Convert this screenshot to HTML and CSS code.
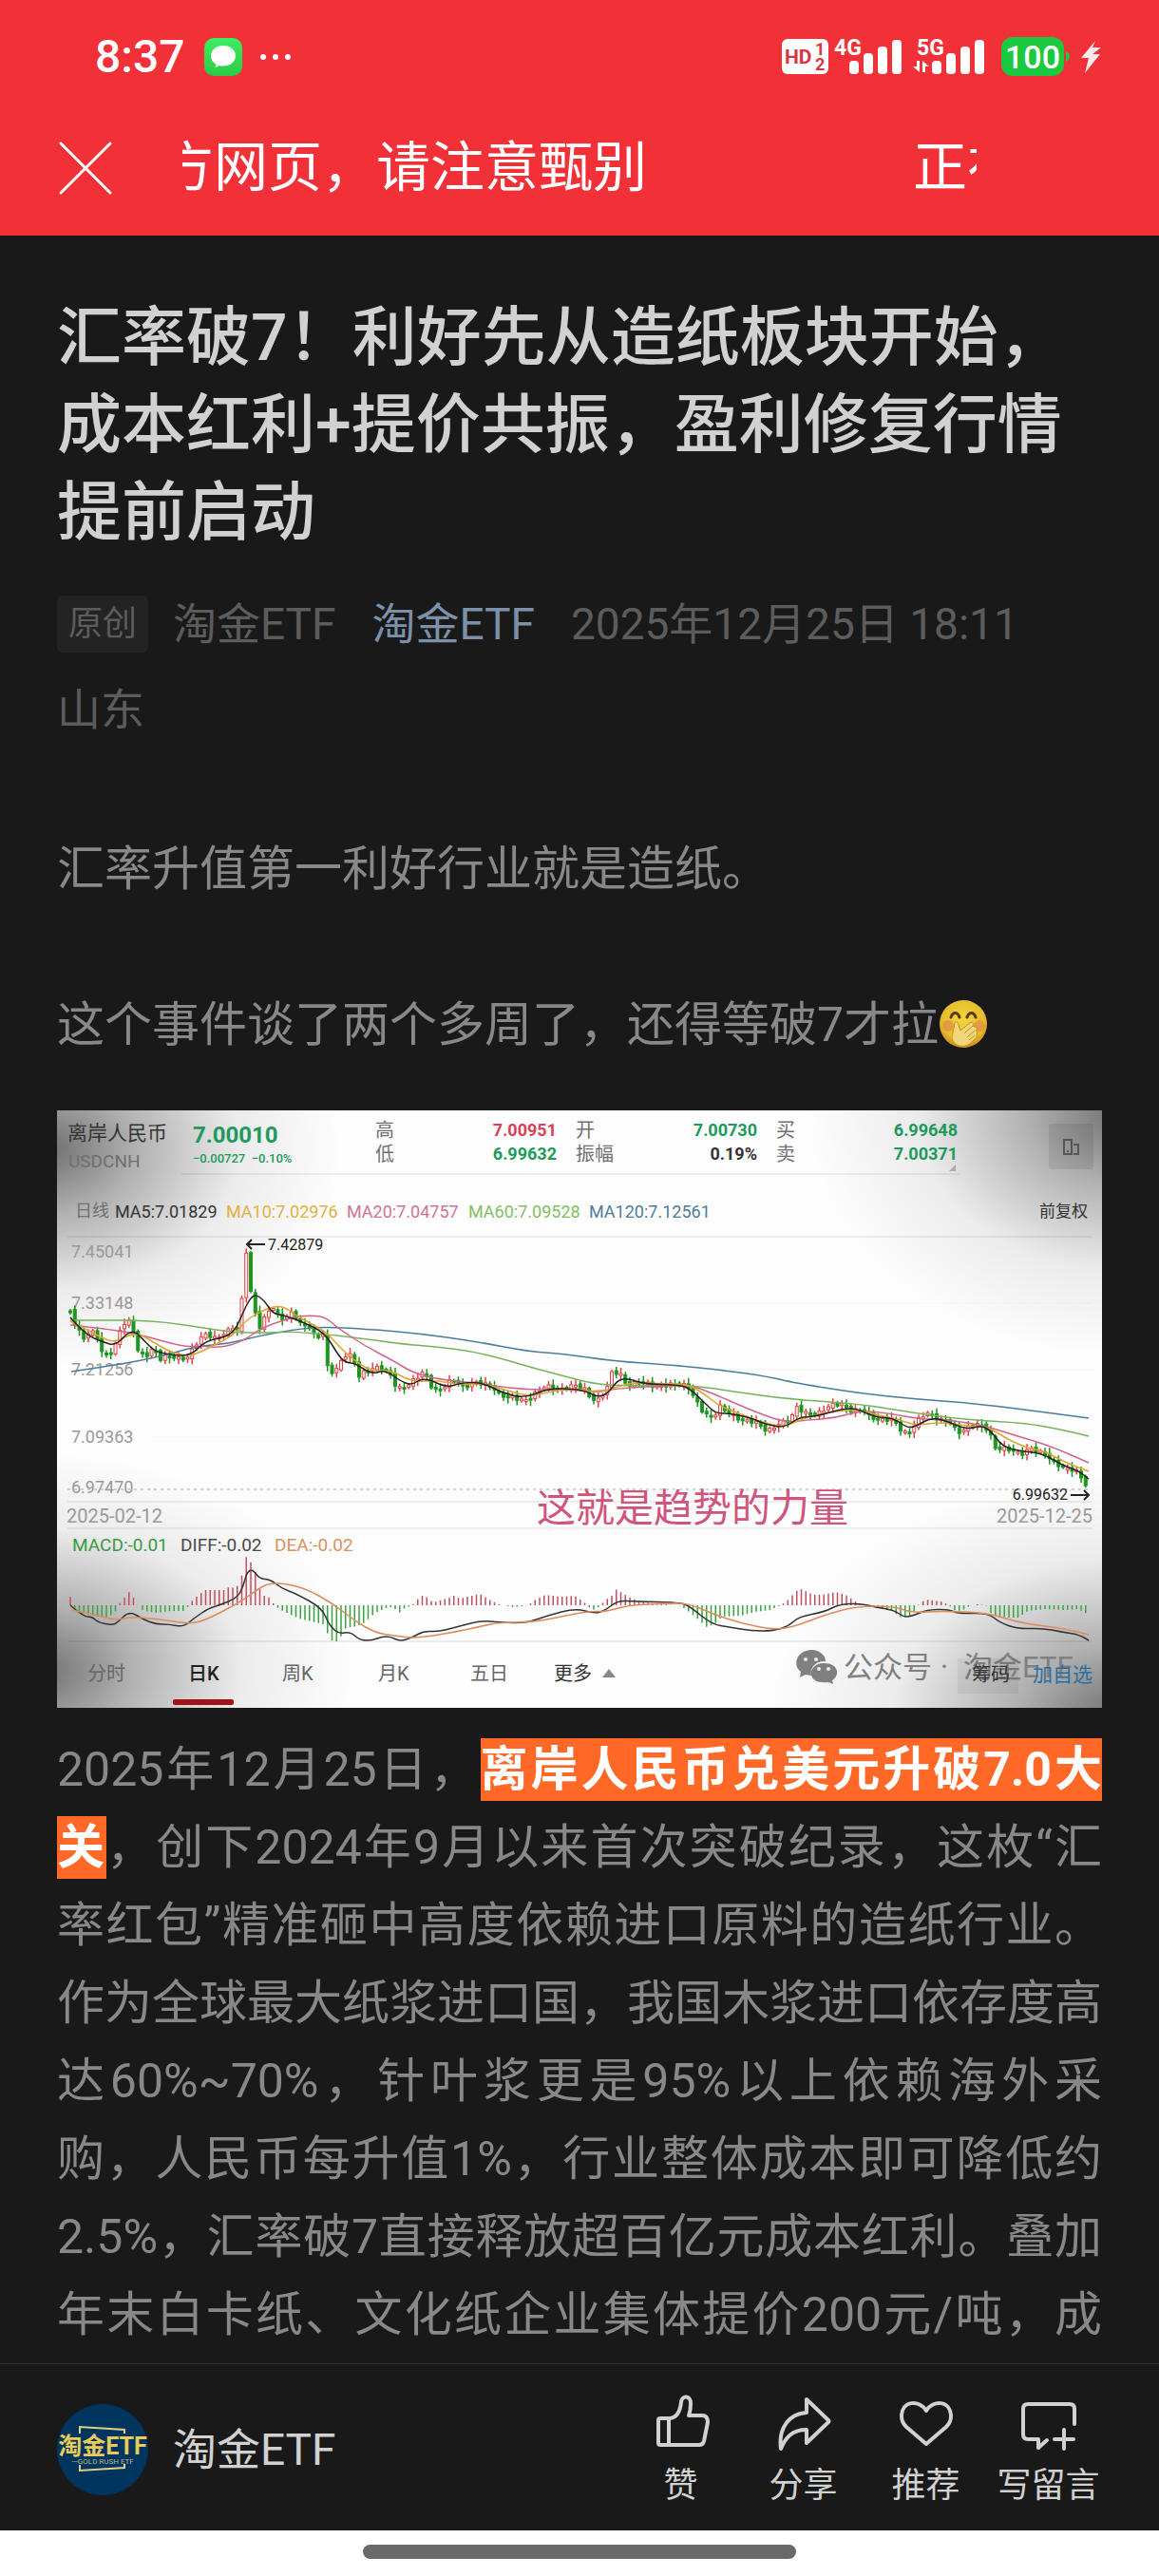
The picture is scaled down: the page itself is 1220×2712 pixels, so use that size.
FILE: index.html
```html
<!DOCTYPE html>
<html lang="zh-CN">
<head>
    <meta charset="UTF-8">
    <meta name="viewport" content="width=device-width, initial-scale=1.0">
    <title>汇率破7！利好先从造纸板块开始</title>
    <link rel="stylesheet" href="styles.css">
</head>
<body>

    <header class="header">
        <div class="status-bar">
            <span class="time">8:37</span>
            <svg class="msg-icon" width="40" height="40" viewBox="0 0 40 40">
                <defs>
                    <linearGradient id="msgGreen" x1="0" y1="0" x2="0" y2="1">
                        <stop offset="0" stop-color="#3bef62"/>
                        <stop offset="1" stop-color="#2bcb42"/>
                    </linearGradient>
                </defs>
                <rect width="40" height="40" rx="10" fill="url(#msgGreen)"/>
                <path d="M20 8c7.500 0 13 4.800 13 10.800s-5.500 10.800-13 10.800c-1.700 0-3.200-.2-4.600-.6-1 1-2.500 1.800-4.200 2 .9-1 1.300-2.200 1.200-3.300C9 26 7 22.700 7 18.800 7 12.800 12.500 8 20 8z" fill="#fff"/>
            </svg>
            <svg class="dots" width="34" height="8" viewBox="0 0 34 8" fill="#fff">
                <circle cx="4" cy="4" r="3"/><circle cx="17" cy="4" r="3"/><circle cx="30" cy="4" r="3"/>
            </svg>
            <svg class="signals" width="338" height="44" viewBox="0 0 338 44" fill="#fff">
                <rect x="1" y="3" width="49" height="37" rx="6"/>
                <g fill="#d83540" font-weight="bold">
                    <text x="4" y="29" font-size="21">HD</text>
                    <text x="36" y="20" font-size="18">1</text>
                    <text x="36" y="36" font-size="18">2</text>
                </g>
                <text x="56" y="20" font-size="23" font-weight="bold">4G</text>
                <rect x="72" y="26" width="10" height="14" rx="4"/>
                <rect x="87" y="18" width="10" height="22" rx="4"/>
                <rect x="102" y="11" width="10" height="29" rx="4"/>
                <rect x="117" y="4" width="10" height="36" rx="4"/>
                <text x="143" y="20" font-size="23" font-weight="bold">5G</text>
                <path d="M146 26v12l-7-6h4v-6zM149 38V26l7 6h-4v6z"/>
                <rect x="159" y="26" width="10" height="14" rx="4"/>
                <rect x="174" y="18" width="10" height="22" rx="4"/>
                <rect x="189" y="11" width="10" height="29" rx="4"/>
                <rect x="204" y="4" width="10" height="36" rx="4"/>
                <rect x="232" y="1" width="66" height="41" rx="12" fill="#19c940"/>
                <path d="M300 16c5 1 5 10 0 11z" fill="#19c940"/>
                <text x="265" y="34" font-size="34" font-weight="500" text-anchor="middle">100</text>
                <path d="M331 5l-15 18h8l-4 16 16-20h-8l9-7h-9z" opacity=".9"/>
            </svg>
        </div>
        <div class="nav-bar">
            <button class="close" aria-label="关闭">
                <svg width="60" height="60" viewBox="0 0 60 60" fill="none" stroke="#fff" stroke-width="3" stroke-linecap="round">
                    <path d="M4 4l52 52M56 4L4 56"/>
                </svg>
            </button>
            <div class="notice"><span>方网页，请注意甄别</span><span>正在</span></div>
        </div>
    </header>

    <main class="article">
        <h1>汇率破7！利好先从造纸板块开始，成本红利+提价共振，盈利修复行情提前启动</h1>
        <div class="meta">
            <span class="original">原创</span>
            <span>淘金ETF</span>
            <a href="#">淘金ETF</a>
            <span>2025年12月25日 18:11</span>
            <span>山东</span>
        </div>

        <p>汇率升值第一利好行业就是造纸。</p>
        <p>这个事件谈了两个多周了，还得等破7才拉<svg class="emoji" viewBox="0 0 52 52">
            <defs>
                <radialGradient id="face" cx=".5" cy=".4" r=".6">
                    <stop offset="0" stop-color="#f0d53c"/>
                    <stop offset=".75" stop-color="#e6bd2c"/>
                    <stop offset="1" stop-color="#cf8a1c"/>
                </radialGradient>
            </defs>
            <circle cx="26" cy="26" r="25" fill="url(#face)"/>
            <circle cx="10" cy="28" r="6" fill="#e08a4a" opacity=".7"/>
            <circle cx="43" cy="28" r="6" fill="#e08a4a" opacity=".7"/>
            <path d="M13 19c2-6 7-6 9 0M30 19c2-6 7-6 9 0" fill="none" stroke="#5a3a10" stroke-width="3" stroke-linecap="round"/>
            <path d="M17 25c2-3 4 0 4 2l2 6 10-8c3-2 5 1 3 3l2 1c2 0 3 2 1 4 2 0 2 3 1 4 1 2-1 4-3 6-5 6-12 8-18 5-6-4-5-9-4-13z" fill="#f1d67a" stroke="#c98f22"/>
            <path d="M36 28l-9 8M38 33l-8 7M38 38l-6 5" stroke="#c98f22"/>
        </svg></p>

        <svg class="chart" viewBox="0 0 1100 629" role="img" aria-label="离岸人民币 日K">
            <defs>
                <radialGradient id="shade">
                    <stop offset="0" stop-color="#000" stop-opacity=".56"/>
                    <stop offset=".3" stop-color="#000" stop-opacity=".3"/>
                    <stop offset=".65" stop-color="#000" stop-opacity=".07"/>
                    <stop offset="1" stop-color="#000" stop-opacity="0"/>
                </radialGradient>
            </defs>
            <rect width="1100" height="629" fill="#fdfdfd"/>
            <g fill="url(#shade)">
                <ellipse cx="-10" cy="40" rx="310" ry="230"/>
                <ellipse cx="1120" cy="0" rx="330" ry="260"/>
                <ellipse cx="-20" cy="590" rx="330" ry="230"/>
                <ellipse cx="1120" cy="640" rx="370" ry="260"/>
            </g>
            <path d="M131 67H951M11 133H1090M11 412H1090M11 440H1090M11 559H1090" stroke="#000" stroke-opacity=".06" stroke-width="2"/>
            <path d="M100 203H1090M100 273H1090M100 344H1090" stroke="#000" stroke-opacity=".03"/>
            <path d="M11 399H1086" stroke="#b9ac90" stroke-dasharray="3 4"/>

            <g class="cjk" fill="#707070">
                <text x="11" y="31" font-size="21" fill="#333">离岸人民币</text>
                <text x="12" y="60" font-size="19">USDCNH</text>
                <text x="335" y="28" font-size="20">高</text>
                <text x="335" y="53" font-size="20">低</text>
                <text x="546" y="28" font-size="20">开</text>
                <text x="546" y="53" font-size="20">振幅</text>
                <text x="757" y="28" font-size="20">买</text>
                <text x="757" y="53" font-size="20">卖</text>
                <text x="19" y="112" font-size="18">日线</text>
                <text x="1034" y="112" font-size="17" fill="#333">前复权</text>
            </g>
            <g fill="#1d9a5c" font-weight="bold">
                <text x="143" y="34" font-size="24">7.00010</text>
                <text x="143" y="55" font-size="13" font-weight="500">−0.00727 &nbsp;−0.10%</text>
                <g font-size="18" text-anchor="end">
                    <text x="526" y="27" fill="#d9405c">7.00951</text>
                    <text x="526" y="52">6.99632</text>
                    <text x="737" y="27">7.00730</text>
                    <text x="737" y="52" fill="#333">0.19%</text>
                    <text x="948" y="27">6.99648</text>
                    <text x="948" y="52">7.00371</text>
                </g>
            </g>
            <path d="M946 57v7h-7z" fill="#aaa"/>
            <rect x="1044" y="14" width="47" height="48" rx="3" fill="#000" opacity=".08"/>
            <path d="M1060 31h8v15h-8zM1070 36h5v10h-5M1063 43h2" fill="none" stroke="#555" stroke-width="2"/>

            <g font-size="18">
                <text x="61" y="113" fill="#333">MA5:7.01829</text>
                <text x="178" y="113" fill="#dfb243">MA10:7.02976</text>
                <text x="305" y="113" fill="#d07493">MA20:7.04757</text>
                <text x="433" y="113" fill="#85bd66">MA60:7.09528</text>
                <text x="560" y="113" fill="#4c7d9c">MA120:7.12561</text>
                <g fill="#999">
                    <text x="15" y="155">7.45041</text>
                    <text x="15" y="209">7.33148</text>
                    <text x="15" y="279">7.21256</text>
                    <text x="15" y="350">7.09363</text>
                    <text x="15" y="403">6.97470</text>
                </g>
            </g>
            <g font-size="20" fill="#999">
                <text x="10" y="434">2025-02-12</text>
                <text x="1090" y="434" text-anchor="end">2025-12-25</text>
            </g>
            <g font-size="19">
                <text x="16" y="464" fill="#3a9a44">MACD:-0.01</text>
                <text x="130" y="464" fill="#4a4a4a">DIFF:-0.02</text>
                <text x="229" y="464" fill="#d9935f">DEA:-0.02</text>
            </g>

            <!-- filled in by chart.js -->
            <g id="candles"></g>
            <g id="macd"></g>
            <g id="lines" fill="none" stroke-width="1.500"></g>

            <g font-size="16" fill="#222">
                <text x="222" y="147">7.42879</text>
                <text x="1064" y="410" text-anchor="end">6.99632</text>
            </g>
            <path d="M219 141H200M205 136l-5 5 5 5M1067 405h19M1081 400l5 5-5 5" fill="none" stroke="#222" stroke-width="2"/>
            <text class="cjk" x="505" y="433" font-size="41" fill="#d0557d">这就是趋势的力量</text>

            <g class="cjk" font-size="20" fill="#666">
                <text x="32" y="600">分时</text>
                <text x="138" y="600" fill="#222" font-weight="500">日K</text>
                <text x="237" y="600">周K</text>
                <text x="338" y="600">月K</text>
                <text x="435" y="600">五日</text>
                <text x="523" y="600" fill="#333">更多</text>
            </g>
            <path d="M574 597l7-9 7 9z" fill="#888"/>
            <rect x="122" y="620" width="64" height="6" rx="2" fill="#a80f1a"/>

            <g fill="#808080">
                <path d="M794 568c9 0 15 6 15 12-9-1-17 6-15 15l-6-1-6 3 1-6c-10-8-3-23 11-23z"/>
                <path d="M807 582c17 0 17 14 9 18l1 4-5-2c-25 3-22-20-5-20z"/>
                <g fill="#eee">
                    <circle cx="788" cy="578" r="2"/><circle cx="799" cy="578" r="2"/>
                    <circle cx="802" cy="588" r="2"/><circle cx="812" cy="588" r="2"/>
                </g>
                <g class="cjk" font-size="31">
                    <text x="828" y="597">公众号</text>
                    <text x="930" y="597">·</text>
                    <text x="954" y="597">淘金ETF</text>
                </g>
            </g>
            <rect x="948" y="577" width="64" height="37" fill="#000" opacity=".05"/>
            <text class="cjk" x="963" y="601" font-size="20" fill="#333">筹码</text>
            <text class="cjk" x="1027" y="601" font-size="21" fill="#2b6f9e">加自选</text>
        </svg>

        <p class="fill">2025年12月25日，<strong>离岸人民币兑美元升破7.0大关</strong>，创下2024年9月以来首次突破纪录，这枚“汇率红包”精准砸中高度依赖进口原料的造纸行业。作为全球最大纸浆进口国，我国木浆进口依存度高达60%~70%，针叶浆更是95%以上依赖海外采购，人民币每升值1%，行业整体成本即可降低约2.5%，汇率破7直接释放超百亿元成本红利。叠加年末白卡纸、文化纸企业集体提价200元/吨，成</p>
    </main>

    <footer class="footer">
        <a class="account" href="#">
            <svg width="96" height="96" viewBox="0 0 96 96">
                <circle cx="48" cy="48" r="48" fill="#00355f"/>
                <path d="M24 31v-7l47 3v4M24 64v6l47-3v-4" fill="none" stroke="#e2cf86" stroke-width="2"/>
                <text class="cjk" x="48" y="53" font-size="25" font-weight="bold" text-anchor="middle" fill="#e8cb58">淘金ETF</text>
                <text x="48" y="63" font-size="8" text-anchor="middle" fill="#b9b98a">---GOLD RUSH ETF</text>
            </svg>
            <span>淘金ETF</span>
        </a>
        <div class="actions">
            <button>
                <svg viewBox="0 0 64 64"><path d="M19 28h-9q-2 0-2 2v24q0 2 2 2h41q4 0 5-4l4-20q0-7-6-7H40c2-5 2-9 2-13 0-8-9-9-10-1-1 9-4 17-13 17zM19 28v28"/></svg>
                赞
            </button>
            <button>
                <svg viewBox="0 0 64 64"><path d="M35 8l23 22q1 1 0 2L35 54V40C20 40 13 48 8 60 5 38 17 23 35 22z"/></svg>
                分享
            </button>
            <button>
                <svg viewBox="0 0 64 64"><path d="M32 20C25 8 6 9 6 26c0 5 2 8 5 11l21 18 21-18c3-3 5-6 5-11C58 9 39 8 32 20z"/></svg>
                推荐
            </button>
            <button>
                <svg viewBox="0 0 64 64"><path d="M59 34V18q0-5-5-5H10q-5 0-5 5v27q0 5 5 5h11v9l9-8M48 40v20M38 50h20"/></svg>
                写留言
            </button>
        </div>
    </footer>
    <div class="home-bar"><span></span></div>

    <script src="chart.js"></script>
</body>
</html>
```

FILE: styles.css
```css
* {
    box-sizing: border-box;
}
body {
    margin: 0;
    height: 100vh;
    display: flex;
    flex-direction: column;
    background-color: #191919;
    color: #888;
    font-family: Roboto, "Noto Sans CJK SC", sans-serif;
    font-size: 50px;
}
button {
    padding: 0;
    border: none;
    background: none;
    font-family: inherit;
    color: inherit;
    cursor: pointer;
}
a {
    text-decoration: none;
}
svg {
    display: block;
    flex-shrink: 0;
}
.cjk {
    font-family: Roboto, "Noto Sans CJK SC", sans-serif;
}

/* top */
.header {
    background-color: #f13038;
    color: #fff;
    padding: 30px 60px 30px;
}
.status-bar {
    display: flex;
    align-items: center;
    height: 60px;
    padding-left: 40px;
}
.time {
    font-size: 48px;
    font-weight: 500;
    line-height: 60px;
}
.msg-icon {
    margin-left: 20px;
}
.dots {
    margin-left: 18px;
}
.signals {
    margin-left: auto;
}
.nav-bar {
    display: flex;
    align-items: center;
    margin-top: 46px;
    height: 82px;
}
.close {
    margin-right: 72px;
}
.notice {
    flex: 1;
    display: flex;
    gap: 280px;
    margin-right: 132px;
    overflow: hidden;
    white-space: nowrap;
    font-size: 57px;
    line-height: 82px;
}
.notice span:first-child {
    margin-left: -24px;
}

/* article */
.article {
    flex: 1;
    min-height: 0;
    overflow: hidden;
    padding: 62px 60px 0;
}
h1 {
    margin: 0 0 26px;
    font-size: 68px;
    line-height: 92px;
    font-weight: 500;
    color: #d1d1d1;
}
.meta {
    display: flex;
    flex-wrap: wrap;
    align-items: center;
    column-gap: 38px;
    margin-bottom: 82px;
    font-size: 46px;
    line-height: 90px;
    color: #5c5c5c;
}
.meta a {
    color: #7d90a9;
}
.meta .original {
    padding: 0 12px;
    border-radius: 6px;
    background-color: #232323;
    font-size: 36px;
    line-height: 60px;
    margin-right: -12px;
}
p {
    margin: 0 0 82px;
    line-height: 82px;
}
.emoji {
    display: inline-block;
    width: 52px;
    height: 52px;
    vertical-align: -8px;
}
.chart {
    width: 100%;
    margin: -33px 0 24px;
    font-family: Roboto, "Noto Sans CJK SC", sans-serif;
}
.fill {
    text-align: justify;
    text-align-last: justify;
}
strong {
    padding: 4px 0;
    background-color: #ff6827;
    color: #fff;
}

/* bottom */
.footer {
    display: flex;
    align-items: center;
    justify-content: space-between;
    height: 176px;
    padding: 4px 52px 0 60px;
    border-top: 1px solid #333;
}
.account {
    display: flex;
    align-items: center;
    gap: 26px;
    font-size: 46px;
    color: #d1d1d1;
}
.account span {
    padding-bottom: 8px;
}
.actions {
    display: grid;
    grid-template-columns: repeat(4, 129px);
}
.actions button {
    display: flex;
    flex-direction: column;
    align-items: center;
    gap: 12px;
    font-size: 36px;
    line-height: 46px;
    color: #d1d1d1;
    white-space: nowrap;
}
.actions svg {
    width: 64px;
    height: 64px;
    fill: none;
    stroke: #d1d1d1;
    stroke-width: 4;
    stroke-linejoin: round;
    stroke-linecap: round;
}
.home-bar {
    display: flex;
    justify-content: center;
    height: 48px;
    padding-top: 15px;
    background-color: #fff;
}
.home-bar span {
    width: 456px;
    height: 15px;
    border-radius: 8px;
    background-color: #696969;
}
```

FILE: chart.js
```javascript
var STEP = 4.75;
var BASE = 521; // MACD zero line

// x, y pairs
var price = [14,211,20,228,28,240,36,232,44,240,48,258,56,256,62,246,68,225,78,222,86,256,94,258,102,250,108,262,116,258,130,262,138,260,146,246,156,235,166,240,176,235,185,228,190,232,194,205,199,146,204,192,209,214,214,230,220,215,226,205,232,216,240,220,248,212,256,225,266,228,272,240,280,235,285,272,292,277,300,262,306,255,312,262,318,280,324,275,332,272,340,270,350,276,358,293,366,292,372,287,380,280,386,275,394,290,402,296,412,286,420,284,428,292,440,286,450,288,460,293,466,300,480,302,492,306,504,298,514,290,530,294,545,289,556,294,562,303,568,307,575,298,580,290,584,276,592,276,600,290,615,285,630,291,650,288,664,290,672,305,682,320,690,324,698,312,710,320,720,326,735,328,748,338,760,330,772,326,778,312,790,320,800,320,815,310,825,309,835,316,850,316,862,326,880,325,888,336,896,342,906,326,915,318,930,326,940,328,948,340,958,334,970,330,980,336,988,356,1000,356,1015,362,1025,356,1040,362,1052,372,1062,378,1072,378,1080,390,1086,398];
var ma5 = [14,218,19,224,34,238,49,244,62,248,79,229,95,246,104,254,123,258,141,258,156,243,175,239,187,233,198,208,204,197,210,194,219,201,227,214,240,216,259,223,282,234,298,261,306,266,313,266,332,278,345,273,363,286,374,289,386,281,411,292,424,287,447,286,470,298,493,303,516,293,543,293,558,296,569,302,580,298,590,284,601,282,617,288,655,289,666,293,682,308,693,319,708,319,731,324,747,331,766,334,781,323,800,322,827,314,842,314,861,323,881,324,896,335,907,331,919,324,934,326,957,336,972,332,982,336,995,354,1015,359,1037,361,1057,373,1076,380,1086,388];
var ma10 = [14,222,30,230,50,241,62,244,82,233,100,243,120,255,141,259,160,250,187,236,198,222,210,214,225,207,238,206,250,215,270,226,284,234,298,250,314,264,332,275,350,273,374,286,400,284,424,289,447,287,474,295,497,301,520,296,547,292,569,298,590,291,608,286,640,288,664,288,682,299,697,311,720,320,747,330,766,333,789,323,815,317,842,315,861,320,885,325,904,332,930,328,955,332,980,333,1000,346,1020,355,1040,359,1062,371,1086,380];
var ma20 = [14,226,62,231,95,238,133,249,152,248,171,250,194,244,217,228,248,218,263,216,282,217,294,228,324,248,355,264,374,276,401,283,439,287,489,294,535,294,569,296,590,293,617,291,666,289,693,299,724,313,766,329,789,326,819,324,846,316,877,319,907,325,942,326,980,333,1011,343,1045,353,1086,371];
var ma60 = [14,221,49,221,83,221,114,223,148,228,187,234,225,234,248,233,286,236,336,242,363,246,401,249,439,254,474,263,497,270,531,279,565,288,597,290,666,289,712,296,770,304,846,309,904,319,961,326,1018,329,1057,336,1086,343];
var ma120 = [15,275,62,268,106,260,148,248,179,246,210,238,248,231,278,228,324,230,382,235,439,243,497,254,531,256,586,264,647,268,705,274,747,280,777,287,846,298,904,304,961,308,1018,315,1086,324];
var diff = [14,521,28,533,37,533,43,539,58,542,64,539,76,527,91,536,104,541,118,541,133,544,145,534,160,524,171,521,190,513,196,501,200,486,206,483,213,493,225,494,236,503,252,509,279,524,286,541,296,551,309,549,319,558,332,558,342,554,351,554,361,559,374,555,386,548,401,549,420,544,447,537,466,539,493,540,516,532,546,524,566,530,578,526,590,516,609,517,655,518,666,522,689,541,708,544,731,548,754,548,770,543,781,533,808,528,823,520,846,519,861,523,881,526,892,534,904,531,915,526,938,525,949,530,980,529,992,539,1011,546,1037,545,1057,549,1076,552,1086,558];
var dea = [15,526,37,530,62,537,79,533,110,536,141,541,160,535,194,517,210,505,222,498,240,498,263,504,290,519,313,537,335,550,355,553,378,556,420,549,447,543,466,539,500,539,531,533,560,527,578,528,600,521,640,519,665,519,690,530,720,540,755,547,778,543,808,531,842,522,881,522,900,529,930,527,980,529,1011,539,1040,543,1062,546,1086,552];
// x, bar height (positive = up)
var macd = [14,9,18,-2,24,-8,50,-13,58,-10,62,-6,66,2,72,9,76,14,82,6,87,-3,92,-6,105,-8,120,-6,134,-6,139,0,143,6,156,16,176,16,182,20,188,17,194,29,199,51,205,44,210,32,214,15,219,9,224,8,229,0,234,-4,244,-9,255,-14,280,-20,285,-30,290,-38,296,-38,304,-24,316,-22,324,-18,335,-8,345,-3,354,-2,360,-8,366,-3,374,0,379,6,386,11,396,3,410,7,418,10,424,7,445,12,455,6,465,1,480,-2,496,0,504,6,514,11,530,9,545,10,555,3,560,-2,566,-5,572,0,578,6,584,10,588,17,595,13,605,7,620,3,640,1,655,0,664,-6,674,-14,684,-23,692,-20,700,-12,720,-11,735,-7,750,-5,762,0,770,6,778,15,784,17,796,11,806,11,820,14,832,10,842,3,850,0,866,-3,880,-6,886,-12,896,-13,904,-4,908,2,915,6,930,4,938,1,944,-5,952,-6,960,-1,968,1,978,0,984,-10,1000,-13,1012,-13,1022,-6,1040,-4,1060,-5,1075,-4,1086,-10];

function at(data, x) {
    if (x <= data[0]) return data[1];
    for (var i = 2; i < data.length; i += 2) {
        if (x <= data[i]) {
            var t = (x - data[i - 2]) / (data[i] - data[i - 2]);
            return data[i - 1] + t * (data[i + 1] - data[i - 1]);
        }
    }
    return data[data.length - 1];
}

function add(parent, name, attrs) {
    var el = document.createElementNS("http://www.w3.org/2000/svg", name);
    for (var key in attrs) el.setAttribute(key, attrs[key]);
    document.getElementById(parent).appendChild(el);
}

// smooth curve through the points, bending at the midpoints
function curve(data, color) {
    var d = "M" + data[0] + " " + data[1];
    for (var i = 2; i < data.length - 2; i += 2) {
        d += "Q" + data[i] + " " + data[i + 1] + " " + (data[i] + data[i + 2]) / 2 + " " + (data[i + 1] + data[i + 3]) / 2;
    }
    d += "L" + data[data.length - 2] + " " + data[data.length - 1];
    add("lines", "path", { d: d, stroke: color });
}

function drawBars() {
    for (var i = 0; i < 226; i++) {
        var x = 14 + i * STEP;
        var wobble = Math.sin(i * 2.3) * 2;
        var open = at(price, x - STEP) - wobble;
        var close = at(price, x) + wobble;
        var high = Math.min(open, close);
        var height = Math.max(2, Math.abs(open - close));
        var up = close < open;
        var color = up ? "#e0444a" : "#1d951f";
        var wick = 2 + (i * 7 % 5);
        add("candles", "path", {
            d: "M" + x + " " + (high - wick) + "V" + high + "M" + x + " " + (high + height) + "v" + wick,
            stroke: color, "stroke-width": 1.5
        });
        add("candles", "rect", {
            x: x - 1.5, y: high, width: 3, height: height,
            fill: up ? "#fbeeee" : color, stroke: color
        });

        var h = at(macd, x);
        add("macd", "path", {
            d: "M" + x + " " + BASE + "v" + -h,
            stroke: h > 0 ? "#c0505f" : "#3aa343", "stroke-width": 1.5
        });
    }
}

drawBars();
curve(ma120, "#4c7d9c");
curve(ma60, "#76b35c");
curve(ma20, "#d0668a");
curve(ma10, "#dfa52f");
curve(ma5, "#222");
curve(diff, "#333");
curve(dea, "#dd8a5c");
```
